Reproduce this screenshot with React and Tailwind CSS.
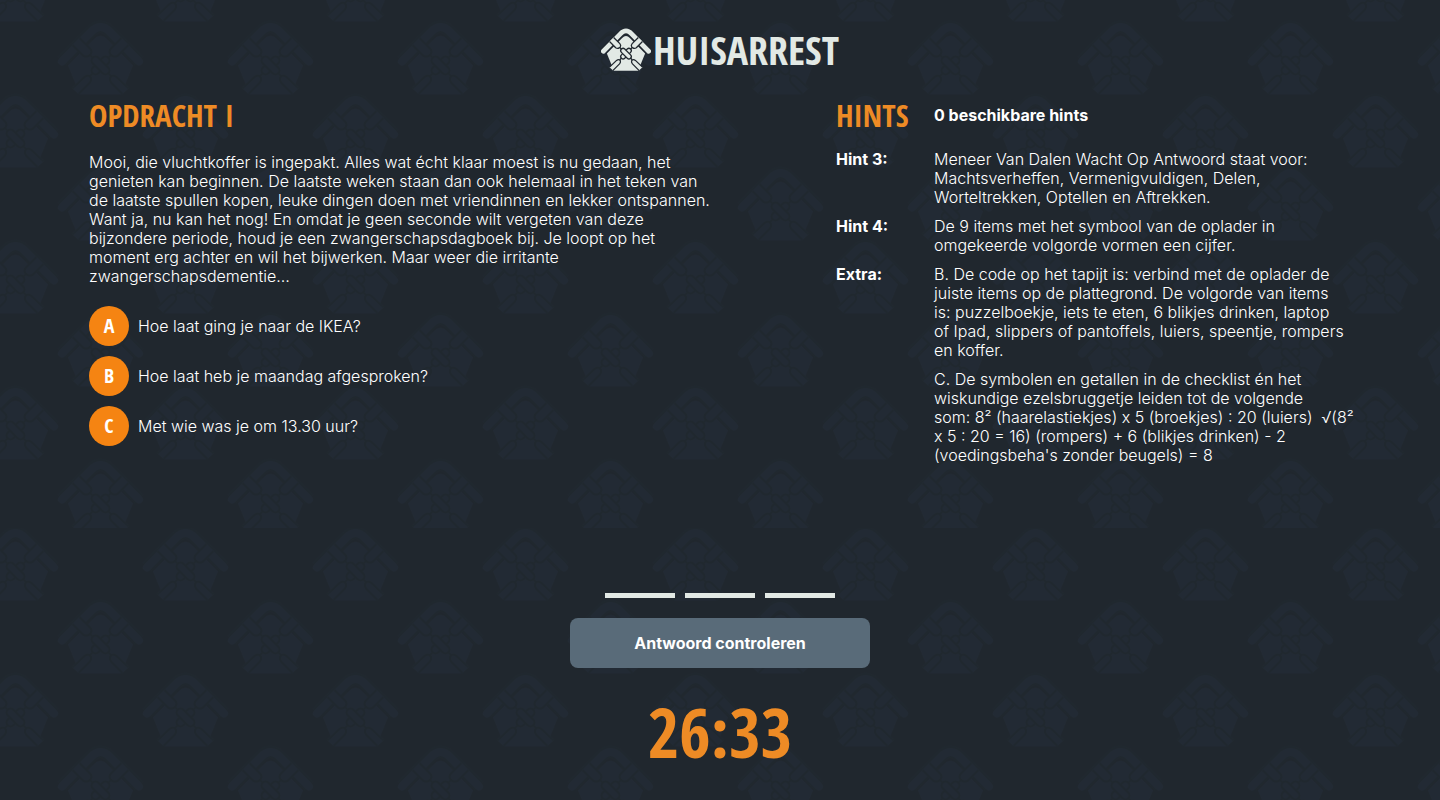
const DISPLAY = "font-['Open_Sans_Condensed','Roboto_Condensed',sans-serif] font-bold uppercase";

function House({ fill, line }) {
  return (
    <g strokeLinejoin="round">
      <path d="M10 43.5 L36 17 Q42.5 10.5 49 17 L75 43.5 L63 72.5 H22 Z" fill={fill} />
      <path d="M4 39 L33 9.5 Q42.5 0 52 9.5 L81 39" fill="none" stroke={line} strokeWidth="12" />
      <path
        d="M4 39.5 L33 10 Q42.5 0 52 10 L81 39.5"
        fill="none"
        stroke={fill}
        strokeWidth="8"
        strokeLinecap="round"
      />
      <g fill={fill} stroke={line} strokeWidth="2.2">
        <path d="M14.5 23 L25 33.5 Q28 35.5 31 33.8 L32.8 32 Q34.5 29 32 26.5 L21.5 16" />
        <path d="M70.5 23 L60 33.5 Q57 35.5 54 33.8 L52.2 32 Q50.5 29 53 26.5 L63.5 16" />
        <path d="M35 36 L32 33 M50 36 L53 33 M35 51 L32 54 M50 51 L53 54" />
        <rect x="-11" y="-4" width="22" height="8" rx="4" transform="translate(42.5 43.5) rotate(-45)" />
        <rect x="-11" y="-4" width="22" height="8" rx="4" transform="translate(42.5 43.5) rotate(45)" />
        <path d="M14.5 66.5 L26.5 55 Q29 53 31.6 54 L33 56 Q33.6 58.5 31.5 61 L20.5 72" />
        <path d="M70.5 66.5 L58.5 55 Q56 53 53.4 54 L52 56 Q51.4 58.5 53.5 61 L64.5 72" />
      </g>
    </g>
  );
}

const rows = [0, 1, 2, 3, 4, 5, 6, 7];

function Backdrop() {
  return (
    <svg className="pointer-events-none absolute inset-0 -z-10 h-full w-full" aria-hidden="true">
      <defs>
        <pattern id="houses" x="-70" y="-51" width="170" height="579" patternUnits="userSpaceOnUse">
          {rows.map((r) =>
            (r % 2 ? [-42, 128] : [43]).map((x) => (
              <g key={`${r}-${x}`} transform={`translate(${x} ${r * 73})`}>
                <House fill="#222a34" line="#20282f" />
              </g>
            ))
          )}
        </pattern>
      </defs>
      <rect width="100%" height="100%" fill="url(#houses)" />
    </svg>
  );
}

const questions = [
  ["A", "Hoe laat ging je naar de IKEA?"],
  ["B", "Hoe laat heb je maandag afgesproken?"],
  ["C", "Met wie was je om 13.30 uur?"],
];

const hints = [
  ["Hint 3:", ["Meneer Van Dalen Wacht Op Antwoord staat voor: Machtsverheffen, Vermenigvuldigen, Delen, Worteltrekken, Optellen en Aftrekken."]],
  ["Hint 4:", ["De 9 items met het symbool van de oplader in omgekeerde volgorde vormen een cijfer."]],
  [
    "Extra:",
    [
      "B. De code op het tapijt is: verbind met de oplader de juiste items op de plattegrond. De volgorde van items is:\u00a0puzzelboekje, iets te eten, 6 blikjes drinken, laptop of\u00a0Ipad, slippers of pantoffels, luiers, speentje, rompers en koffer.",
      "C. De symbolen en getallen in de checklist én het wiskundige ezelsbruggetje leiden tot de volgende som:\u00a08² (haarelastiekjes) x 5 (broekjes) : 20 (luiers)\u00a0 √(8² x 5 : 20 = 16) (rompers) + 6 (blikjes drinken) - 2 (voedingsbeha's zonder beugels) = 8",
    ],
  ],
];

export default function App() {
  return (
    <div className="relative isolate flex min-h-screen flex-col bg-[#20272e] font-['Inter',sans-serif] text-base leading-[19px] font-light text-white">
      <Backdrop />
      <header className="flex justify-center pt-7">
        <a href="#" className="flex items-center gap-0.5 text-[#e2e9e5]">
          <svg className="h-[43px] w-[50px]" viewBox="0 0 85 73" aria-hidden="true">
            <House fill="#e2e9e5" line="#20272e" />
          </svg>
          <span className={`${DISPLAY} text-[40px] leading-[43px]`}>Huisarrest</span>
        </a>
      </header>

      <main className="flex flex-1 flex-col">
        <div className="flex justify-between pt-6 pr-[79px] pl-[89px]">
          <section className="w-1/2 max-w-[624px]">
            <h1 className={`${DISPLAY} text-[31px] leading-10 text-[#ee8b25]`}>Opdracht I</h1>
            <p className="mt-[18px]">
              Mooi, die vluchtkoffer is ingepakt. Alles wat écht klaar moest is nu gedaan, het genieten kan beginnen. De
              laatste weken staan dan ook helemaal in het teken van de laatste spullen kopen, leuke dingen doen met
              vriendinnen en lekker ontspannen. Want ja, nu kan het nog! En omdat je geen seconde wilt vergeten van deze
              bijzondere periode, houd je een zwangerschapsdagboek bij. Je loopt op het moment erg achter en wil het
              bijwerken. Maar weer die irritante zwangerschapsdementie…
            </p>
            <ul className="mt-5 flex flex-col gap-2.5">
              {questions.map(([letter, text]) => (
                <li key={letter} className="flex items-center gap-[9px]">
                  <span className={`${DISPLAY} flex size-10 items-center justify-center rounded-full bg-[#f58412] text-xl`}>
                    {letter}
                  </span>
                  {text}
                </li>
              ))}
            </ul>
          </section>

          <section className="w-[42%] max-w-[525px]">
            <div className="flex items-center">
              <h2 className={`${DISPLAY} w-[98px] text-[31px] leading-10 text-[#ee8b25]`}>Hints</h2>
              <p className="font-bold">0 beschikbare hints</p>
            </div>
            <dl className="mt-[15px] flex flex-col gap-2.5">
              {hints.map(([label, texts]) => (
                <div key={label} className="flex">
                  <dt className="w-[98px] shrink-0 font-bold">{label}</dt>
                  <dd className="flex flex-col gap-2.5">
                    {texts.map((t) => (
                      <p key={t}>{t}</p>
                    ))}
                  </dd>
                </div>
              ))}
            </dl>
          </section>
        </div>

        <form className="mt-auto flex flex-col items-center pb-7" onSubmit={(e) => e.preventDefault()}>
          <div className="flex gap-2.5">
            {[1, 2, 3].map((n) => (
              <input
                key={n}
                type="text"
                maxLength={1}
                aria-label={`Antwoord ${n}`}
                className={`${DISPLAY} h-12 w-[70px] border-b-5 border-[#e2e9e5] bg-transparent text-center text-[31px] outline-none`}
              />
            ))}
          </div>
          <button type="submit" className="mt-5 h-[50px] w-[300px] rounded-lg bg-[#596b79] font-bold">
            Antwoord controleren
          </button>
          <div role="timer" className={`${DISPLAY} mt-6 text-[68px] leading-[80px] text-[#ee8b25]`}>
            26:33
          </div>
        </form>
      </main>
    </div>
  );
}
